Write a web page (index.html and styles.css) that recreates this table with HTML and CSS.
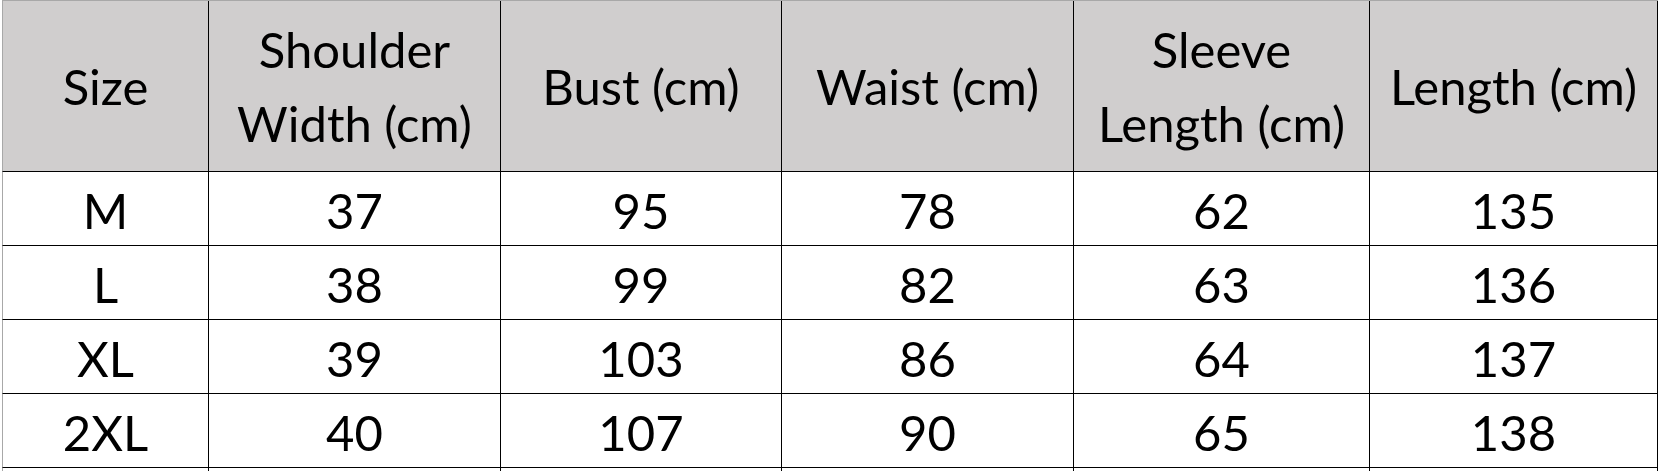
FILE: index.html
```html
<!DOCTYPE html>
<html lang="en">
<head>
<meta charset="utf-8">
<title>Size Chart</title>
<link rel="stylesheet" href="styles.css">
</head>
<body>
<div class="sheet">
  <div class="grid">
    <div class="cell head first">Size</div>
    <div class="cell head">Shoulder<br>Width (cm)</div>
    <div class="cell head">Bust (cm)</div>
    <div class="cell head">Waist (cm)</div>
    <div class="cell head">Sleeve<br>Length (cm)</div>
    <div class="cell head">Length (cm)</div>

    <div class="cell first">M</div>
    <div class="cell">37</div>
    <div class="cell">95</div>
    <div class="cell">78</div>
    <div class="cell">62</div>
    <div class="cell">135</div>

    <div class="cell first">L</div>
    <div class="cell">38</div>
    <div class="cell">99</div>
    <div class="cell">82</div>
    <div class="cell">63</div>
    <div class="cell">136</div>

    <div class="cell first">XL</div>
    <div class="cell">39</div>
    <div class="cell">103</div>
    <div class="cell">86</div>
    <div class="cell">64</div>
    <div class="cell">137</div>

    <div class="cell first">2XL</div>
    <div class="cell">40</div>
    <div class="cell">107</div>
    <div class="cell">90</div>
    <div class="cell">65</div>
    <div class="cell">138</div>

    <div class="cell first"></div>
    <div class="cell"></div>
    <div class="cell"></div>
    <div class="cell"></div>
    <div class="cell"></div>
    <div class="cell"></div>
  </div>
</div>
</body>
</html>
```
FILE: styles.css
```css
html, body {
  margin: 0;
  padding: 0;
  background: #ffffff;
  overflow: hidden;
}

.sheet {
  padding: 0 0 0 2px;
  width: 1660px;
  height: 471px;
  box-sizing: border-box;
  overflow: hidden;
}

.grid {
  display: grid;
  grid-template-columns: 207px 292px 281px 292px 296px 288px;
  grid-template-rows: 171px 74px 74px 74px 74px 74px;
  font-family: Lato, "Open Sans", sans-serif;
  font-size: 49px;
  color: #000000;
  border-top: 1px solid #a8a8a8;
  width: max-content;
}

.cell {
  box-sizing: border-box;
  border-right: 1px solid #000000;
  border-bottom: 1px solid #000000;
  display: flex;
  align-items: center;
  justify-content: center;
  text-align: center;
  line-height: 74px;
  padding-top: 2px;
}

.cell.first {
  border-left: 1px solid #a8a8a8;
}

.cell.head {
  background: #d0cece;
  padding-top: 0;
}
```
